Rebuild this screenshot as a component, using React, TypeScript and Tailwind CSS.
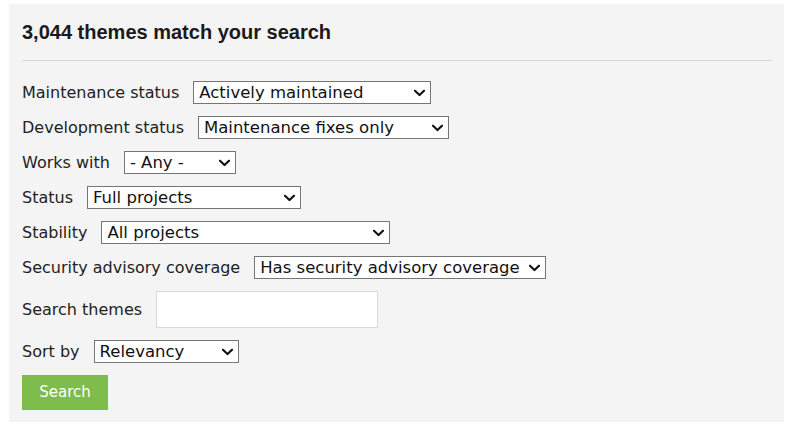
import React from "react";

// Search filter panel for the themes listing
const filters = [
    { label: "Maintenance status", value: "Actively maintained", width: "w-[238px]" },
    { label: "Development status", value: "Maintenance fixes only", width: "w-[251px]" },
    { label: "Works with", value: "- Any -", width: "w-[112px]" },
    { label: "Status", value: "Full projects", width: "w-[214px]" },
    { label: "Stability", value: "All projects", width: "w-[289px]" },
    { label: "Security advisory coverage", value: "Has security advisory coverage", width: "w-[292px]" },
];

function FilterSelect({ value, width }: { value: string; width: string }) {
    return (
        <span className="relative inline-flex">
            <select
                defaultValue={value}
                className={`${width} h-[23px] appearance-none border border-[#767676] bg-white pl-[5px] pr-[18px] pt-px text-[16.5px] leading-none text-[#111]`}
            >
                <option value={value}>{value}</option>
            </select>
            {/* chevron */}
            <svg
                className="pointer-events-none absolute right-[6px] top-1/2 -translate-y-1/2"
                width="11"
                height="7"
                viewBox="0 0 11 7"
                fill="none"
            >
                <path d="M1 1.2 L5.5 5.5 L10 1.2" stroke="#111" strokeWidth="2" strokeLinecap="square" />
            </svg>
        </span>
    );
}

export default function App() {
    return (
        <div className="min-h-[424px] bg-white pl-[9px] pt-[4px] font-['DejaVu_Sans',sans-serif] text-[#222]">
            <div className="w-[775px] bg-[#f4f4f4] px-[13px] pb-[12px] pt-[16px]">
                <h2 className="font-['Liberation_Sans',Arial,sans-serif] text-[20px] font-bold leading-[24px] text-[#1a1a1a]">
                    3,044 themes match your search
                </h2>
                <div className="mt-[16px] h-px w-[750px] bg-[#d6d6d6]" />

                <div className="mt-[20px] flex flex-col gap-[12px]">
                    {filters.map((f) => (
                        <div key={f.label} className="flex items-center gap-[14px]">
                            <label className="text-[16px] leading-none">{f.label}</label>
                            <FilterSelect value={f.value} width={f.width} />
                        </div>
                    ))}

                    <div className="flex items-center gap-[14px]">
                        <label className="text-[16px] leading-none">Search themes</label>
                        <input
                            type="text"
                            className="h-[37px] w-[222px] border border-[#d9d9d9] bg-white px-2 text-[15px]"
                        />
                    </div>

                    <div className="flex items-center gap-[14px]">
                        <label className="text-[16px] leading-none">Sort by</label>
                        <FilterSelect value="Relevancy" width="w-[145px]" />
                    </div>

                    <div>
                        <button className="h-[35px] w-[86px] bg-[#7ebd4b] text-[15px] text-white">
                            Search
                        </button>
                    </div>
                </div>
            </div>
        </div>
    );
}
